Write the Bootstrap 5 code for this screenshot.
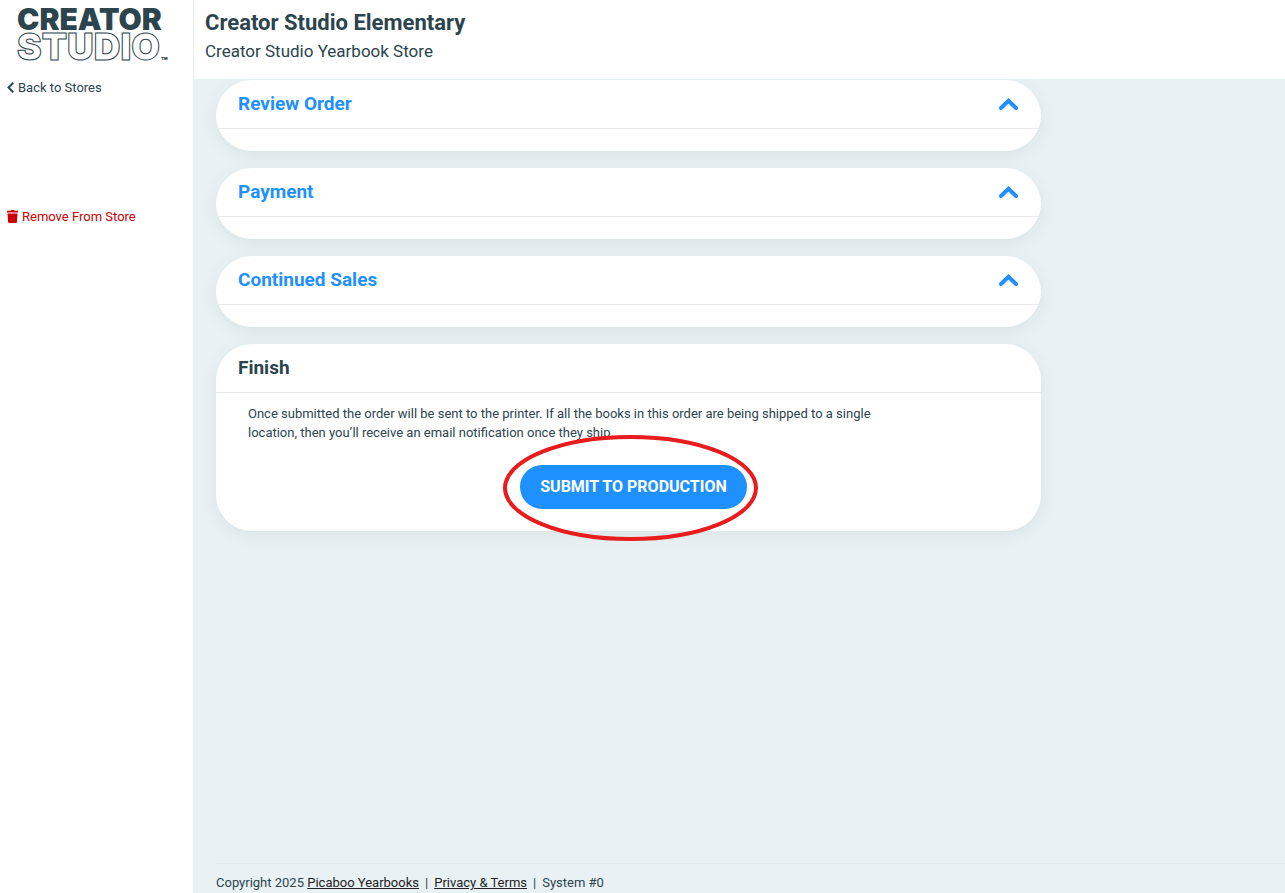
<!DOCTYPE html>
<html lang="en">
<head>
<meta charset="utf-8">
<meta name="viewport" content="width=device-width, initial-scale=1">
<title>Creator Studio Elementary</title>
<link rel="stylesheet" href="https://cdn.jsdelivr.net/npm/bootstrap@5.3.0/dist/css/bootstrap.min.css">
<style>
  :root { --ink: #2b444d; --sky: #1e90ff; --mist: #e9f1f4; --rule: #e6eaec; }
  body { font-family: Roboto, "Liberation Sans", sans-serif; font-size: 13px; line-height: 19px; color: var(--ink); background: #fff; }
  a { color: inherit; }
  .side { width: 194px; border-right: 1px solid var(--mist); }
  .side-logo { width: 170px; height: 70px; margin: 0 0 8px 8px; }
  .side-link { padding: 0 7px; gap: 4px; }
  .side-remove { color: #c00; margin-top: 110px; }
  .top-bar { height: 79px; padding: 9px 11px; background: #fff; }
  .top-bar h1 { font-size: 22px; line-height: 28px; font-weight: 700; }
  .top-bar p { font-size: 17px; line-height: 28px; }
  .stage { background: var(--mist); padding-left: 22px; }
  .steps { max-width: 825px; gap: 17px; padding-top: 1px; }
  .step { border: 0; border-radius: 36px; overflow: hidden; box-shadow: 0 4px 16px rgba(43, 68, 77, .08); color: inherit; }
  .step-head { height: 49px; padding: 0 22px; border-bottom: 1px solid var(--rule); }
  .step-head h2, .step-toggle { font-size: 19px; line-height: 24px; font-weight: 700; }
  .step-toggle { color: var(--sky); }
  .step-body { min-height: 22px; }
  .finish-body { padding: 11px 22px 22px 32px; }
  .finish-body p { max-width: 640px; margin-bottom: 23px; }
  .btn-submit { height: 44px; padding: 0 20px; border: 0; border-radius: 22px; background: var(--sky); color: #fff; font-size: 16px; line-height: 24px; font-weight: 700; }
  .btn-submit:hover { background: #0b7ff0; color: #fff; }
  .ring { position: absolute; left: -17px; top: -30px; width: 255px; height: 106px; pointer-events: none; }
  .foot { border-top: 1px solid var(--rule); padding: 9px 0 1px; gap: 6px; }
  .foot a { color: #222; }
</style>
</head>
<body>
<div class="d-flex min-vh-100">
  <aside class="side flex-shrink-0 d-flex flex-column align-items-start">
    <svg class="side-logo" viewBox="0 0 170 70" role="img" aria-label="Creator Studio">
      <g font-family="Inter, 'Liberation Sans', sans-serif" font-weight="900">
        <text x="9" y="30" font-size="30" fill="#2b444d">CREATOR</text>
        <text x="9" y="60" font-size="37" fill="#fff" stroke="#2b444d" stroke-width="1">STUDIO</text>
        <text x="153" y="60" font-size="4" fill="#2b444d">TM</text>
      </g>
    </svg>
    <a href="#" class="side-link d-flex align-items-center text-decoration-none">
      <svg width="7" height="12" viewBox="0 0 7 12" fill="none" stroke="currentColor" stroke-width="2" aria-hidden="true"><path d="M6.300 .7 1.500 5.500 6.300 10.300"/></svg>
      Back to Stores
    </a>
    <a href="#" class="side-link side-remove d-flex align-items-center text-decoration-none">
      <svg width="11" height="14" viewBox="0 0 11 14" fill="currentColor" aria-hidden="true"><path d="M0 .8h3.500L4 0h3l.5.8H11v1.600H0zM.5 3.400h10L9.900 12a1 1 0 0 1-1 1H2.100a1 1 0 0 1-1-1z"/></svg>
      Remove From Store
    </a>
  </aside>
  <div class="flex-grow-1 d-flex flex-column">
    <header class="top-bar">
      <h1 class="mb-0">Creator Studio Elementary</h1>
      <p class="mb-0">Creator Studio Yearbook Store</p>
    </header>
    <div class="stage flex-grow-1 d-flex flex-column">
      <main class="steps d-flex flex-column">
        <section class="step card">
          <div class="step-head d-flex align-items-center">
            <button type="button" class="step-toggle btn p-0 border-0 w-100 d-flex justify-content-between align-items-center">Review Order
              <svg width="20" height="12" viewBox="0 0 20 12" fill="none" stroke="currentColor" stroke-width="4" stroke-linecap="round" aria-hidden="true"><path d="M2 10 9.500 2.800 17 10"/></svg>
            </button>
          </div>
          <div class="step-body"></div>
        </section>
        <section class="step card">
          <div class="step-head d-flex align-items-center">
            <button type="button" class="step-toggle btn p-0 border-0 w-100 d-flex justify-content-between align-items-center">Payment
              <svg width="20" height="12" viewBox="0 0 20 12" fill="none" stroke="currentColor" stroke-width="4" stroke-linecap="round" aria-hidden="true"><path d="M2 10 9.500 2.800 17 10"/></svg>
            </button>
          </div>
          <div class="step-body"></div>
        </section>
        <section class="step card">
          <div class="step-head d-flex align-items-center">
            <button type="button" class="step-toggle btn p-0 border-0 w-100 d-flex justify-content-between align-items-center">Continued Sales
              <svg width="20" height="12" viewBox="0 0 20 12" fill="none" stroke="currentColor" stroke-width="4" stroke-linecap="round" aria-hidden="true"><path d="M2 10 9.500 2.800 17 10"/></svg>
            </button>
          </div>
          <div class="step-body"></div>
        </section>
        <section class="step card overflow-visible">
          <div class="step-head d-flex align-items-center"><h2 class="mb-0">Finish</h2></div>
          <div class="finish-body">
            <p>Once submitted the order will be sent to the printer. If all the books in this order are being shipped to a single location, then you’ll receive an email notification once they ship.</p>
            <div class="d-flex justify-content-center">
              <div class="position-relative">
                <button type="submit" class="btn btn-submit">SUBMIT TO PRODUCTION</button>
                <svg class="ring" viewBox="0 0 255 106" aria-hidden="true"><ellipse cx="127.500" cy="53" rx="125.500" ry="51" fill="none" stroke="#e81c1c" stroke-width="4"/></svg>
              </div>
            </div>
          </div>
        </section>
      </main>
      <footer class="foot mt-auto d-flex">
        <span>Copyright 2025 <a href="#">Picaboo Yearbooks</a></span>
        <span>|</span>
        <a href="#">Privacy &amp; Terms</a>
        <span>|</span>
        <span>System #0</span>
      </footer>
    </div>
  </div>
</div>
<script src="https://cdn.jsdelivr.net/npm/bootstrap@5.3.0/dist/js/bootstrap.bundle.min.js"></script>
</body>
</html>
